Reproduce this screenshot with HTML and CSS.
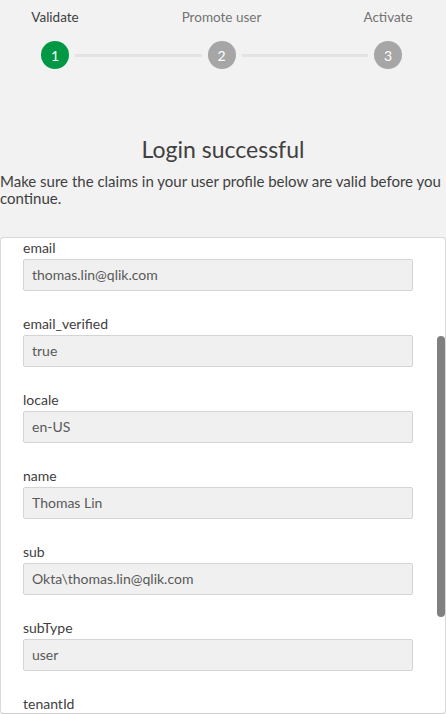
FILE: index.html
```html
<!DOCTYPE html>
<html lang="en">
<head>
<meta charset="utf-8">
<title>Login successful</title>
<link rel="stylesheet" href="styles.css">
</head>
<body>
<div class="page">
  <div class="stepper">
    <div class="step-labels">
      <span class="step-label active">Validate</span>
      <span class="step-label">Promote user</span>
      <span class="step-label">Activate</span>
    </div>
    <div class="step-track">
      <span class="dot done">1</span>
      <span class="line"></span>
      <span class="dot">2</span>
      <span class="line"></span>
      <span class="dot">3</span>
    </div>
  </div>

  <h1 class="title">Login successful</h1>
  <p class="intro">Make sure the claims in your user profile below are valid before you continue.</p>

  <div class="card">
    <div class="fields">
      <div class="field"><label class="field-label">email</label><div class="field-input">thomas.lin@qlik.com</div></div>
      <div class="field"><label class="field-label">email_verified</label><div class="field-input">true</div></div>
      <div class="field"><label class="field-label">locale</label><div class="field-input">en-US</div></div>
      <div class="field"><label class="field-label">name</label><div class="field-input">Thomas Lin</div></div>
      <div class="field"><label class="field-label">sub</label><div class="field-input">Okta\thomas.lin@qlik.com</div></div>
      <div class="field"><label class="field-label">subType</label><div class="field-input">user</div></div>
      <div class="field"><label class="field-label">tenantId</label><div class="field-input">&nbsp;</div></div>
    </div>
    <div class="scrollbar"></div>
  </div>
</div>
</body>
</html>
```

FILE: styles.css
```css
* { box-sizing: border-box; }
html, body {
  margin: 0;
  padding: 0;
  background: #f2f2f2;
  width: 446px;
  height: 714px;
  overflow: hidden;
}
body {
  font-family: "Lato", "Noto Sans", sans-serif;
  color: #404040;
}
.page {
  width: 446px;
  height: 714px;
  display: flex;
  flex-direction: column;
}
.stepper {
  padding-top: 8px;
}
.step-labels {
  display: flex;
  justify-content: space-between;
  padding-right: 3px;
}
.step-label {
  width: 110px;
  text-align: center;
  font-size: 13.5px;
  line-height: 18px;
  color: #737373;
}
.step-label.active {
  color: #404040;
}
.step-track {
  display: flex;
  align-items: center;
  padding: 0 44px 0 41px;
  margin-top: 15px;
}
.dot {
  width: 28px;
  height: 28px;
  border-radius: 50%;
  background: #a6a6a6;
  color: #fff;
  font-size: 14px;
  display: flex;
  align-items: center;
  justify-content: center;
  flex: none;
}
.dot.done {
  background: #009845;
}
.line {
  flex: 1;
  height: 3px;
  background: #e3e3e3;
  margin: 0 6px;
}
.title {
  margin: 66px 0 0;
  font-size: 23px;
  font-weight: 400;
  text-align: center;
  line-height: 28px;
  color: #404040;
}
.intro {
  margin: 10px 0 0;
  font-size: 15px;
  line-height: 17px;
  color: #404040;
  padding: 0;
}
.card {
  position: relative;
  margin-top: 30px;
  flex: 1;
  background: #fff;
  border: 1px solid #d9d9d9;
  border-bottom-color: #cccccc;
  border-radius: 4px;
  overflow: hidden;
}
.fields {
  padding: 0 32px 0 22px;
}
.field {
  display: flex;
  flex-direction: column;
  margin-bottom: 23px;
}
.field-label {
  font-size: 14px;
  line-height: 20px;
  color: #404040;
  margin-bottom: 1px;
}
.field-input {
  height: 32px;
  background: #f0f0f0;
  border: 1px solid #d4d4d4;
  border-radius: 2px;
  padding: 0 8px;
  font-size: 14px;
  line-height: 30px;
  color: #595959;
}
.scrollbar {
  position: absolute;
  right: 0;
  top: 98px;
  width: 8px;
  height: 281px;
  border-radius: 4px;
  background: #808080;
}
```
